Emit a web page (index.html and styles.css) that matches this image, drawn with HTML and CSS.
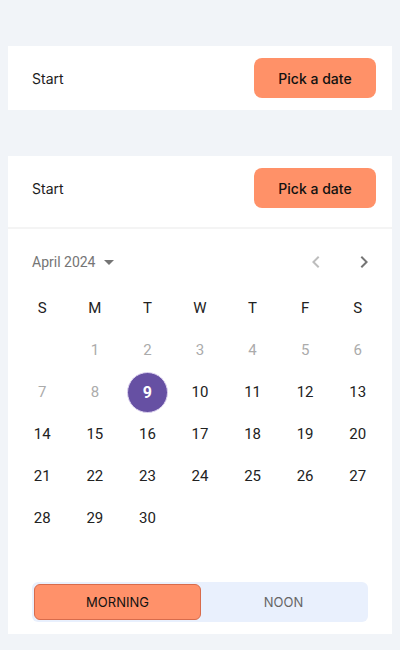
FILE: index.html
```html
<!DOCTYPE html>
<html>
<head>
<meta charset="utf-8">
<link rel="stylesheet" href="styles.css">
</head>
<body>
<div class="card">
  <div class="row">
    <span class="label">Start</span>
    <button class="pick">Pick a date</button>
  </div>
</div>

<div class="card card-cal">
  <div class="row">
    <span class="label">Start</span>
    <button class="pick">Pick a date</button>
  </div>
  <div class="divider"></div>
  <div class="cal">
    <div class="cal-head">
      <div class="month">April 2024
        <svg class="caret" width="10" height="5" viewBox="0 0 10 5"><path d="M0 0h10L5 5z" fill="#757575"/></svg>
      </div>
      <div class="navs">
        <svg class="nav prev" width="24" height="24" viewBox="0 0 24 24"><path d="M15.41 7.41 14 6l-6 6 6 6 1.41-1.41L10.83 12z" fill="#bdbdbd"/></svg>
        <svg class="nav next" width="24" height="24" viewBox="0 0 24 24"><path d="M10 6 8.59 7.41 13.17 12l-4.58 4.59L10 18l6-6z" fill="#757575"/></svg>
      </div>
    </div>
    <div class="grid">
      <span class="wd">S</span><span class="wd">M</span><span class="wd">T</span><span class="wd">W</span><span class="wd">T</span><span class="wd">F</span><span class="wd">S</span>
      <span class="d"></span><span class="d off">1</span><span class="d off">2</span><span class="d off">3</span><span class="d off">4</span><span class="d off">5</span><span class="d off">6</span>
      <span class="d off">7</span><span class="d off">8</span><span class="d sel"><span class="dot">9</span></span><span class="d">10</span><span class="d">11</span><span class="d">12</span><span class="d">13</span>
      <span class="d">14</span><span class="d">15</span><span class="d">16</span><span class="d">17</span><span class="d">18</span><span class="d">19</span><span class="d">20</span>
      <span class="d">21</span><span class="d">22</span><span class="d">23</span><span class="d">24</span><span class="d">25</span><span class="d">26</span><span class="d">27</span>
      <span class="d">28</span><span class="d">29</span><span class="d">30</span>
    </div>
  </div>
  <div class="toggle">
    <div class="seg active">MORNING</div>
    <div class="seg">NOON</div>
  </div>
</div>
</body>
</html>
```

FILE: styles.css
```css
* { box-sizing: border-box; }
html, body { margin: 0; }
body {
  background: #f1f4f8;
  padding: 46px 8px 0;
  font-family: Inter, "Noto Sans", sans-serif;
  color: #1a1a1a;
}
.card {
  background: #fff;
  margin-bottom: 46px;
}
.row {
  height: 64px;
  display: flex;
  align-items: center;
  justify-content: space-between;
  padding: 0 16px 0 24px;
}
.label { font-size: 14px; color: #1c1c1c; }
.pick {
  width: 122px;
  height: 40px;
  border: none;
  border-radius: 8px;
  background: #ff9168;
  font-family: Inter, "Noto Sans", sans-serif;
  font-size: 14px;
  font-weight: 500;
  color: #111;
  padding: 0;
}
.divider {
  margin-top: 7px;
  height: 2px;
  background: #f4f4f4;
}
.cal { padding: 0 8px; font-family: Roboto, sans-serif; }
.cal-head {
  height: 50px;
  margin-top: 8px;
  display: flex;
  align-items: center;
  justify-content: space-between;
  padding: 0 8px 0 16px;
}
.month {
  display: flex;
  align-items: center;
  gap: 8px;
  font-size: 14px;
  color: #757575;
}
.caret { margin-top: 1px; }
.navs { display: flex; gap: 24px; }
.nav { display: block; }
.grid {
  display: grid;
  grid-template-columns: repeat(7, 1fr);
  grid-auto-rows: 42px;
  font-size: 15px;
}
.wd, .d {
  display: flex;
  align-items: center;
  justify-content: center;
  color: #222;
}
.d.off { color: #ababab; }
.dot {
  width: 41px;
  height: 41px;
  border-radius: 50%;
  background: #6650a3;
  border: 1px solid #ddd3f0;
  color: #fff;
  font-weight: 700;
  font-size: 16px;
  display: flex;
  align-items: center;
  justify-content: center;
}
.card-cal { padding-bottom: 12px; }
.toggle {
  margin: 43px 24px 0;
  padding: 2px;
  height: 40px;
  background: #e9f0fd;
  border-radius: 6px;
  display: flex;
}
.seg {
  flex: 1;
  display: flex;
  align-items: center;
  justify-content: center;
  font-size: 13px;
  color: #666;
  border-radius: 6px;
}
.seg.active {
  background: #ff916a;
  border: 1.5px solid #d86b4b;
  color: #111;
}
```
